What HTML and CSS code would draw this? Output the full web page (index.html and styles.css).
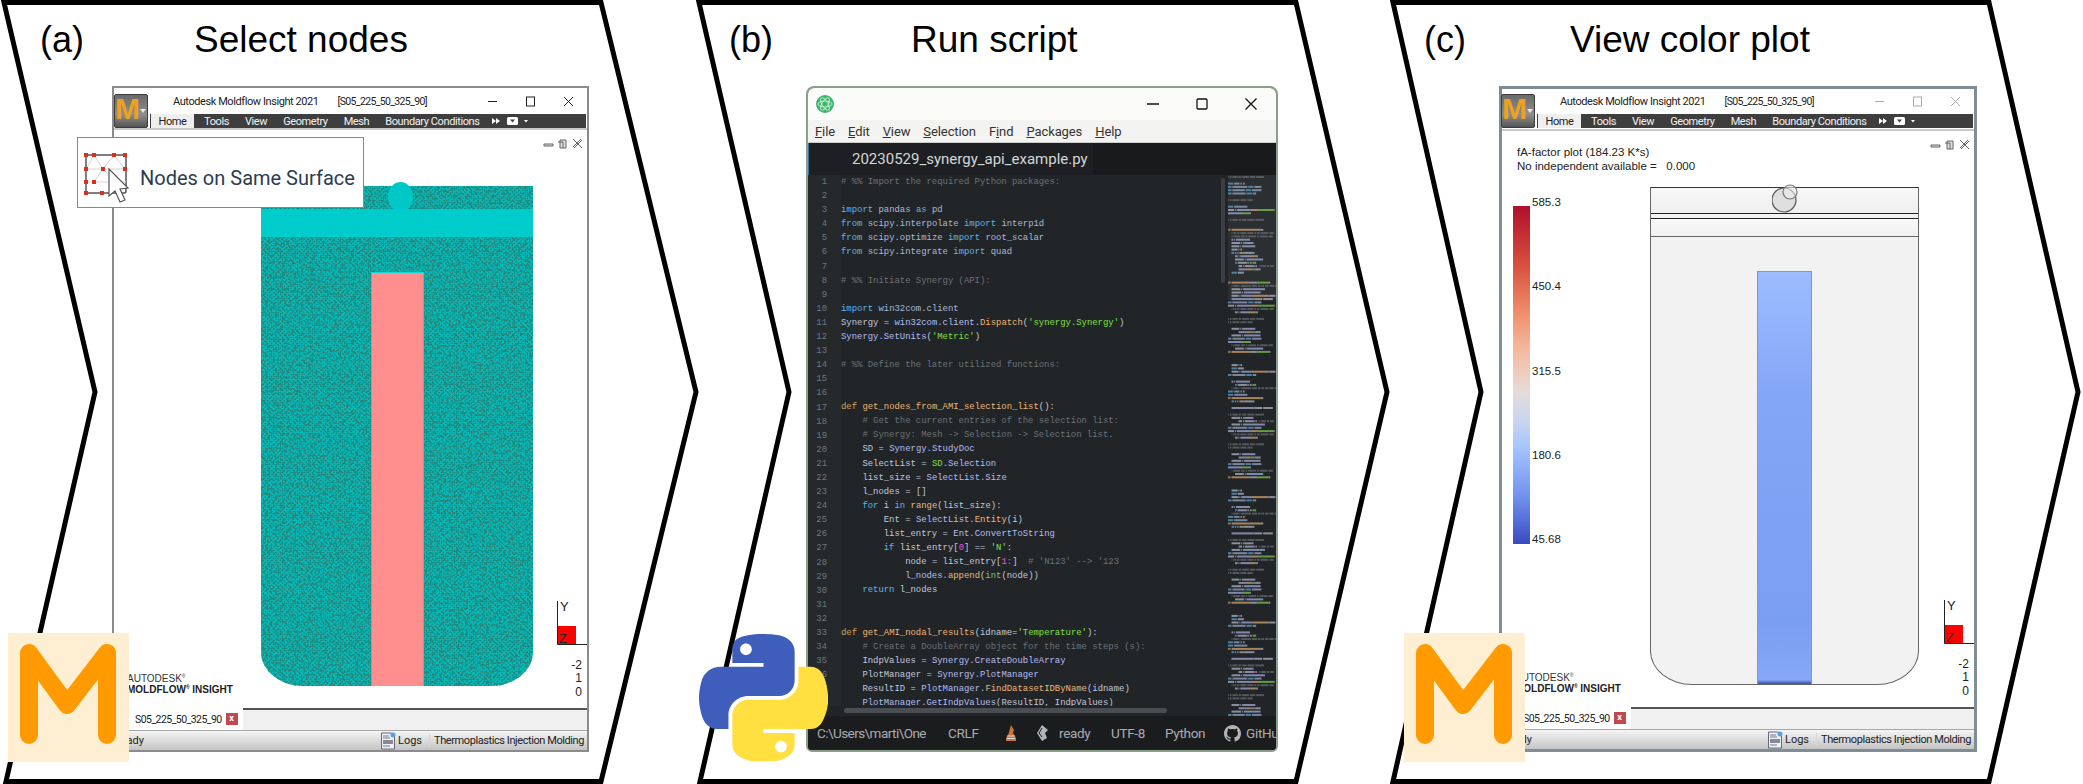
FILE: index.html
```html
<!DOCTYPE html>
<html lang="en">
<head>
    <meta charset="UTF-8">
    <title>Moldflow Synergy API workflow</title>
    <link rel="stylesheet" href="styles.css">
</head>
<body>

<div class="figure">
    <svg class="chevrons" viewBox="0 0 2083 784" width="2083" height="784">
        <polygon points="4,2.5 601,2.5 696,392 601,781.5 6,781.5 95,392"/>
        <polygon points="699,2.5 1296,2.5 1387,392 1296,781.5 700,781.5 789,392"/>
        <polygon points="1393,2.5 1989,2.5 2078,392 1989,781.5 1393,781.5 1481,392"/>
    </svg>

    <!-- (a) -->
    <section class="step step-a">
        <div class="step-head">
            <span class="step-label">(a)</span>
            <span class="step-title">Select nodes</span>
        </div>
        <div class="mf-window mf-window-a">
            <div class="mf-top">
                <div class="mf-button"><span class="mf-button-m">M</span><span class="mf-button-caret"></span></div>
                <div class="mf-top-right">
                    <div class="mf-title">
                        <span class="mf-title-app">Autodesk Moldflow Insight 2021</span>
                        <span class="mf-title-doc">[S05_225_50_325_90]</span>
                        <div class="win-controls">
                            <svg viewBox="0 0 11 11"><path d="M1 5.5h9"/></svg>
                            <svg viewBox="0 0 11 11"><rect x="1.5" y="1" width="8" height="9"/></svg>
                            <svg viewBox="0 0 11 11"><path d="M1 1l9 9M10 1l-9 9"/></svg>
                        </div>
                    </div>
                    <div class="mf-ribbon">
                        <span class="mf-tab-active">Home</span>
                        <span>Tools</span><span>View</span><span>Geometry</span><span>Mesh</span><span>Boundary Conditions</span>
                        <svg class="ribbon-more" viewBox="0 0 44 10" width="44" height="10">
                            <path d="M1 2l4 3-4 3zM5 2l4 3-4 3z" fill="#fff"/>
                            <rect x="16" y="1" width="11" height="8" rx="1.5" fill="#fff"/>
                            <path d="M19 3.5h5l-2.5 3z" fill="#444"/>
                            <path d="M33 4h4l-2 2.5z" fill="#fff"/>
                        </svg>
                    </div>
                </div>
            </div>
            <div class="mf-view">
                <svg class="doc-controls" viewBox="0 0 40 12" width="40" height="12">
                    <path d="M1 7h9v2H1z"/><path d="M17 3h6v8h-6zM15 5h5v6"/><path d="M30 2l8 8M38 2l-8 8M31 3l8 8M39 3l-8 8"/>
                </svg>
                <div class="part part-mesh">
                    <svg class="mesh-noise" width="272" height="500">
                        <filter id="speck" x="0" y="0" width="100%" height="100%">
                            <feTurbulence type="fractalNoise" baseFrequency="0.42" numOctaves="2" seed="7"/>
                            <feColorMatrix values="0 0 0 0 .02  0 0 0 0 .25  0 0 0 0 .2  8 0 0 0 -3.9"/>
                        </filter>
                        <rect width="272" height="500" filter="url(#speck)"/>
                    </svg>
                    <div class="gate-mesh"></div>
                    <div class="mesh-band"></div>
                    <div class="mesh-insert"></div>
                </div>
                <div class="mf-logo"><span class="mf-logo-light">AUTODESK<sup>®</sup></span><span class="mf-logo-bold">MOLDFLOW<sup>®</sup> INSIGHT</span></div>
                <svg class="triad" viewBox="0 0 30 46" width="30" height="46">
                    <rect x="1" y="26" width="18" height="18" fill="#fe0000"/>
                    <path d="M.5 1v43.5H30" fill="none" stroke="#222"/>
                    <text x="3" y="11">Y</text>
                    <text x="2" y="43">Z</text>
                </svg>
                <div class="mf-scale"><span>-2</span><span>1</span><span>0</span></div>
            </div>
            <div class="mf-tabs">
                <div class="mf-doc-tab"><span>S05_225_50_325_90</span><span class="mf-doc-close">x</span></div>
                <div class="mf-tabs-rest"></div>
            </div>
            <div class="mf-status">
                <span class="mf-ready">Ready</span>
                <svg class="logs-icon" viewBox="0 0 16 18" width="16" height="18">
                    <path d="M1.5 1h10l3 3v13h-13z" fill="#eef2f6" stroke="#667"/>
                    <path d="M3 8h10v4H3z" fill="#889"/><path d="M3 14h7M3 4h6M3 6h7" stroke="#778"/>
                    <circle cx="13" cy="3" r="2.5" fill="#5aa0e0"/>
                </svg>
                <span class="mf-logs">Logs</span>
                <span class="mf-mode">Thermoplastics Injection Molding</span>
            </div>
            <div class="tooltip">
                <svg class="tooltip-icon" viewBox="0 0 50 52" width="50" height="52">
                    <rect x="3" y="2" width="40" height="38" rx="2" fill="#fff" stroke="#555" stroke-width="1.5"/>
                    <path d="M3 16h40M3 29h40M11 2l9 14 11-14M20 16l-9 13M20 16l12 13M3 16l8-14M31 2l11 14" fill="none" stroke="#d4d4d4"/>
                    <g fill="#d8321f">
                        <rect x="1" y="0" width="4" height="4"/><rect x="9" y="0" width="4" height="4"/><rect x="29" y="0" width="4" height="4"/><rect x="40" y="0" width="4" height="4"/>
                        <rect x="1" y="14" width="4" height="4"/><rect x="18" y="14" width="4" height="4"/><rect x="40" y="14" width="4" height="4"/>
                        <rect x="1" y="27" width="4" height="4"/><rect x="9" y="27" width="4" height="4"/>
                        <rect x="1" y="38" width="4" height="4"/><rect x="17" y="38" width="4" height="4"/>
                    </g>
                    <path d="M26 16v27l6-5 5 11 5-2-5-11 8-1z" fill="#fff" stroke="#555" stroke-width="1.2"/>
                </svg>
                <span class="tooltip-text">Nodes on Same Surface</span>
            </div>
        </div>
        <div class="badge-m">
            <svg viewBox="0 0 121 129" width="121" height="129"><polyline points="21,102 21,20 59,72 99,20 99,102"/></svg>
        </div>
    </section>

    <!-- (b) -->
    <section class="step step-b">
        <div class="step-head">
            <span class="step-label">(b)</span>
            <span class="step-title">Run script</span>
        </div>
        <div class="atom-window">
            <div class="atom-title">
                <svg class="atom-logo" viewBox="0 0 18 18" width="18" height="18">
                    <circle cx="9" cy="9" r="9" fill="#3fb56f"/>
                    <g fill="none" stroke="#d5f5df" stroke-width=".8">
                        <ellipse cx="9" cy="9" rx="7" ry="3"/>
                        <ellipse cx="9" cy="9" rx="7" ry="3" transform="rotate(60 9 9)"/>
                        <ellipse cx="9" cy="9" rx="7" ry="3" transform="rotate(120 9 9)"/>
                    </g>
                </svg>
                <div class="win-controls">
                    <svg viewBox="0 0 12 12"><path d="M0 6h12"/></svg>
                    <svg viewBox="0 0 12 12"><rect x="1" y="1" width="10" height="10" rx="1"/></svg>
                    <svg viewBox="0 0 12 12"><path d="M.5 .5l11 11M11.5 .5l-11 11"/></svg>
                </div>
            </div>
            <div class="atom-menu">
                <span><u>F</u>ile</span><span><u>E</u>dit</span><span><u>V</u>iew</span><span><u>S</u>election</span><span>F<u>i</u>nd</span><span><u>P</u>ackages</span><span><u>H</u>elp</span>
            </div>
            <div class="atom-tabs"><div class="atom-tab">20230529_synergy_api_example.py</div></div>
            <div class="atom-editor">
<pre class="gutter">1
2
3
4
5
6
7
8
9
10
11
12
13
14
15
16
17
18
19
20
21
22
23
24
25
26
27
28
29
30
31
32
33
34
35
36
37
38</pre>
                <div class="code" id="code">
                    <div class="c"># %% Import the required Python packages:</div>
                    <div></div>
                    <div><span class="k">import</span> <span class="m">pandas</span> <span class="k">as</span> <span class="m">pd</span></div>
                    <div><span class="k">from</span> <span class="m">scipy.interpolate</span> <span class="k">import</span> <span class="m">interp1d</span></div>
                    <div><span class="k">from</span> <span class="m">scipy.optimize</span> <span class="k">import</span> <span class="m">root_scalar</span></div>
                    <div><span class="k">from</span> <span class="m">scipy.integrate</span> <span class="k">import</span> <span class="m">quad</span></div>
                    <div></div>
                    <div class="c"># %% Initiate Synergy (API):</div>
                    <div></div>
                    <div><span class="k">import</span> <span class="m">win32com.client</span></div>
                    <div><span class="v">Synergy</span> <span class="o">=</span> <span class="a">win32com.client.</span><span class="f">Dispatch</span>(<span class="s">'synergy.Synergy'</span>)</div>
                    <div><span class="a">Synergy.SetUnits</span>(<span class="s">'Metric'</span>)</div>
                    <div></div>
                    <div class="c"># %% Define the later utilized functions:</div>
                    <div></div>
                    <div></div>
                    <div><span class="d">def</span> <span class="f">get_nodes_from_AMI_selection_list</span>():</div>
                    <div class="c">    # Get the current entries of the selection list:</div>
                    <div class="c">    # Synergy: Mesh -&gt; Selection -&gt; Selection list.</div>
                    <div>    <span class="v">SD</span> <span class="o">=</span> <span class="a">Synergy.StudyDoc</span></div>
                    <div>    <span class="v">SelectList</span> <span class="o">=</span> <span class="s">SD</span><span class="a">.Selection</span></div>
                    <div>    <span class="v">list_size</span> <span class="o">=</span> <span class="a">SelectList.Size</span></div>
                    <div>    <span class="v">l_nodes</span> <span class="o">=</span> <span class="a">[]</span></div>
                    <div>    <span class="k">for</span> <span class="v">i</span> <span class="k">in</span> <span class="f">range</span>(<span class="v">list_size</span>):</div>
                    <div>        <span class="v">Ent</span> <span class="o">=</span> <span class="a">SelectList.</span><span class="f">Entity</span>(<span class="v">i</span>)</div>
                    <div>        <span class="v">list_entry</span> <span class="o">=</span> <span class="a">Ent.ConvertToString</span></div>
                    <div>        <span class="k">if</span> <span class="v">list_entry</span>[<span class="n">0</span>] <span class="o">==</span> <span class="s">'N'</span>:</div>
                    <div>            <span class="v">node</span> <span class="o">=</span> <span class="v">list_entry</span>[<span class="n">1:</span>]  <span class="c"># 'N123' --&gt; '123</span></div>
                    <div>            <span class="a">l_nodes.</span><span class="f">append</span>(<span class="g">int</span>(<span class="v">node</span>))</div>
                    <div>    <span class="k">return</span> <span class="v">l_nodes</span></div>
                    <div></div>
                    <div></div>
                    <div><span class="d">def</span> <span class="f">get_AMI_nodal_results</span>(<span class="v">idname</span>=<span class="s">'Temperature'</span>):</div>
                    <div class="c">    # Create a DoubleArray object for the time steps (s):</div>
                    <div>    <span class="v">IndpValues</span> <span class="o">=</span> <span class="a">Synergy.CreateDoubleArray</span></div>
                    <div>    <span class="v">PlotManager</span> <span class="o">=</span> <span class="a">Synergy.PlotManager</span></div>
                    <div>    <span class="v">ResultID</span> <span class="o">=</span> <span class="a">PlotManager.</span><span class="f">FindDatasetIDByName</span>(<span class="v">idname</span>)</div>
                    <div>    <span class="a">PlotManager.GetIndpValues</span>(<span class="v">ResultID, IndpValues</span>)</div>
                </div>
                <div class="vscroll"></div>
                <svg class="minimap" id="minimap" width="48" height="541"></svg>
                <div class="hscroll"></div>
            </div>
            <div class="atom-status">
                <span class="atom-path">C:\Users\marti\One</span>
                <span class="atom-crlf">CRLF</span>
                <svg class="atom-kite" viewBox="0 0 10 16" width="10" height="16">
                    <path d="M5 0l3 5-1 3 3 5v3H0v-3l2-3 1-3z" fill="#c9733a"/><path d="M1 11h8M1 13.5h8" stroke="#ddd"/>
                </svg>
                <svg class="atom-git" viewBox="0 0 12 16" width="12" height="16">
                    <path d="M6 0l6 5-3 3 2 5-5 3-5-8z" fill="#aeb4ba"/><path d="M6 3L3 8l3 4" fill="none" stroke="#1b1c1e"/>
                </svg>
                <span class="atom-ready">ready</span>
                <span class="atom-utf">UTF-8</span>
                <span class="atom-lang">Python</span>
                <svg class="atom-github" viewBox="0 0 16 16" width="17" height="19">
                    <path fill="#b4b4b4" d="M8 0C3.58 0 0 3.58 0 8c0 3.54 2.29 6.53 5.47 7.59.4.07.55-.17.55-.38 0-.19-.01-.82-.01-1.49-2.01.37-2.53-.49-2.69-.94-.09-.23-.48-.94-.82-1.13-.28-.15-.68-.52-.01-.53.63-.01 1.08.58 1.23.82.72 1.21 1.87.87 2.33.66.07-.52.28-.87.51-1.07-1.78-.2-3.64-.89-3.64-3.95 0-.87.31-1.59.82-2.15-.08-.2-.36-1.02.08-2.12 0 0 .67-.21 2.2.82.64-.18 1.32-.27 2-.27.68 0 1.36.09 2 .27 1.53-1.04 2.2-.82 2.2-.82.44 1.1.16 1.92.08 2.12.51.56.82 1.27.82 2.15 0 3.07-1.87 3.75-3.65 3.95.29.25.54.73.54 1.48 0 1.07-.01 1.93-.01 2.2 0 .21.15.46.55.38A8.013 8.013 0 0016 8c0-4.42-3.58-8-8-8z"/>
                </svg>
                <span class="atom-hub">GitHu</span>
            </div>
        </div>
        <svg class="badge-python" viewBox="0 0 111 111" preserveAspectRatio="none" width="129" height="127">
            <path fill="#3f5dbb" fill-rule="evenodd" d="M54.919.0001c-4.584.0216-8.961.4125-12.813 1.0938C30.760 3.099 28.700 7.295 28.700 15.032v10.219h26.813v3.406H18.637c-7.792 0-14.616 4.684-16.750 13.594-2.462 10.213-2.571 16.586 0 27.250 1.906 7.938 6.458 13.594 14.250 13.594h9.219v-12.250c0-8.850 7.657-16.656 16.750-16.656h26.781c7.455 0 13.406-6.138 13.406-13.625V15.032c0-7.266-6.130-12.725-13.406-13.937C64.282.328 59.502-.020 54.919.0001zm-14.500 8.219c2.770 0 5.031 2.299 5.031 5.125 0 2.816-2.262 5.094-5.031 5.094-2.780 0-5.031-2.278-5.031-5.094 0-2.826 2.252-5.125 5.031-5.125z"/>
            <path fill="#ffe040" fill-rule="evenodd" d="M85.638 28.657v11.906c0 9.231-7.826 17-16.750 17H42.106c-7.336 0-13.406 6.279-13.406 13.625v25.531c0 7.266 6.319 11.540 13.406 13.625 8.487 2.496 16.626 2.947 26.781 0 6.750-1.954 13.406-5.888 13.406-13.625V86.500H55.513v-3.406h40.188c7.792 0 10.696-5.436 13.406-13.594 2.799-8.399 2.680-16.476 0-27.250-1.926-7.757-5.604-13.594-13.406-13.594zM70.575 93.313c2.780 0 5.031 2.278 5.031 5.094 0 2.826-2.252 5.125-5.031 5.125-2.770 0-5.031-2.299-5.031-5.125 0-2.816 2.262-5.094 5.031-5.094z"/>
        </svg>
    </section>

    <!-- (c) -->
    <section class="step step-c">
        <div class="step-head">
            <span class="step-label">(c)</span>
            <span class="step-title">View color plot</span>
        </div>
        <div class="mf-window mf-window-c">
            <div class="mf-top">
                <div class="mf-button"><span class="mf-button-m">M</span><span class="mf-button-caret"></span></div>
                <div class="mf-top-right">
                    <div class="mf-title">
                        <span class="mf-title-app">Autodesk Moldflow Insight 2021</span>
                        <span class="mf-title-doc">[S05_225_50_325_90]</span>
                        <div class="win-controls">
                            <svg viewBox="0 0 11 11"><path d="M1 5.5h9"/></svg>
                            <svg viewBox="0 0 11 11"><rect x="1.5" y="1" width="8" height="9"/></svg>
                            <svg viewBox="0 0 11 11"><path d="M1 1l9 9M10 1l-9 9"/></svg>
                        </div>
                    </div>
                    <div class="mf-ribbon">
                        <span class="mf-tab-active">Home</span>
                        <span>Tools</span><span>View</span><span>Geometry</span><span>Mesh</span><span>Boundary Conditions</span>
                        <svg class="ribbon-more" viewBox="0 0 44 10" width="44" height="10">
                            <path d="M1 2l4 3-4 3zM5 2l4 3-4 3z" fill="#fff"/>
                            <rect x="16" y="1" width="11" height="8" rx="1.5" fill="#fff"/>
                            <path d="M19 3.5h5l-2.5 3z" fill="#444"/>
                            <path d="M33 4h4l-2 2.5z" fill="#fff"/>
                        </svg>
                    </div>
                </div>
            </div>
            <div class="mf-view">
                <svg class="doc-controls" viewBox="0 0 40 12" width="40" height="12">
                    <path d="M1 7h9v2H1z"/><path d="M17 3h6v8h-6zM15 5h5v6"/><path d="M30 2l8 8M38 2l-8 8M31 3l8 8M39 3l-8 8"/>
                </svg>
                <div class="plot-info">
                    <div>fA-factor plot (184.23 K*s)</div>
                    <div>No independent available = &nbsp; 0.000</div>
                </div>
                <div class="legend">
                    <div class="legend-bar"></div>
                    <div class="legend-labels"><span>585.3</span><span>450.4</span><span>315.5</span><span>180.6</span><span>45.68</span></div>
                </div>
                <div class="part part-plot">
                    <div class="plot-lid"></div>
                    <div class="plot-rim"></div>
                    <div class="plot-strip"></div>
                    <svg class="gate-plot" viewBox="0 0 30 30" width="30" height="30">
                        <circle cx="12" cy="16" r="12" fill="#dedede" stroke="#555" stroke-width="1.2"/>
                        <circle cx="18" cy="8" r="7" fill="#ececec" fill-opacity=".6" stroke="#777" stroke-width="1.2"/>
                    </svg>
                </div>
                <div class="mf-logo"><span class="mf-logo-light">AUTODESK<sup>®</sup></span><span class="mf-logo-bold">MOLDFLOW<sup>®</sup> INSIGHT</span></div>
                <svg class="triad" viewBox="0 0 30 46" width="30" height="46">
                    <rect x="1" y="26" width="18" height="18" fill="#fe0000"/>
                    <path d="M.5 1v43.5H30" fill="none" stroke="#222"/>
                    <text x="3" y="11">Y</text>
                    <text x="2" y="43">Z</text>
                </svg>
                <div class="mf-scale"><span>-2</span><span>1</span><span>0</span></div>
            </div>
            <div class="mf-tabs">
                <div class="mf-doc-tab"><span>S05_225_50_325_90</span><span class="mf-doc-close">x</span></div>
                <div class="mf-tabs-rest"></div>
            </div>
            <div class="mf-status">
                <span class="mf-ready">Ready</span>
                <svg class="logs-icon" viewBox="0 0 16 18" width="16" height="18">
                    <path d="M1.5 1h10l3 3v13h-13z" fill="#eef2f6" stroke="#667"/>
                    <path d="M3 8h10v4H3z" fill="#889"/><path d="M3 14h7M3 4h6M3 6h7" stroke="#778"/>
                    <circle cx="13" cy="3" r="2.5" fill="#5aa0e0"/>
                </svg>
                <span class="mf-logs">Logs</span>
                <span class="mf-mode">Thermoplastics Injection Molding</span>
            </div>
        </div>
        <div class="badge-m">
            <svg viewBox="0 0 121 129" width="121" height="129"><polyline points="21,102 21,20 59,72 99,20 99,102"/></svg>
        </div>
    </section>
</div>

<script src="minimap.js"></script>
</body>
</html>
```

FILE: styles.css
```css
body {
    margin: 0;
    background-color: #fff;
    font-family: "Liberation Sans", Arial, sans-serif;
    color: #000;
}
.figure {
    position: relative;
    display: flex;
    width: 2083px;
    height: 784px;
    overflow: hidden;
}
.chevrons {
    position: absolute;
    top: 0;
    left: 0;
}
.chevrons polygon {
    fill: #fff;
    stroke: #000;
    stroke-width: 5;
}

/* steps */
.step {
    position: relative;
    flex: none;
    width: 694px;
}
.step-b {
    width: 695px;
}
.step-head {
    display: flex;
    height: 67px;
    padding-top: 19px;
    font-size: 36px;
    line-height: 42px;
}
.step-title {
    font-size: 37px;
}
.step-a .step-label { margin-left: 40px; }
.step-a .step-title { margin-left: 110px; }
.step-b .step-label { margin-left: 35px; }
.step-b .step-title { margin-left: 138px; }
.step-c .step-label { margin-left: 35px; }
.step-c .step-title { margin-left: 104px; }

.badge-m {
    position: absolute;
    top: 633px;
    left: 8px;
    width: 121px;
    height: 129px;
    background-color: #ffefd2;
}
.step-c .badge-m {
    left: 15px;
}
.badge-m polyline {
    fill: none;
    stroke: #ff9a00;
    stroke-width: 18;
    stroke-linecap: round;
    stroke-linejoin: round;
}
.badge-python {
    position: absolute;
    top: 634px;
    left: 5px;
}

/* moldflow window */
.mf-window {
    position: relative;
    display: flex;
    flex-direction: column;
    box-sizing: border-box;
    width: 477px;
    height: 666px;
    margin-left: 112px;
    background-color: #fff;
    border: 2px solid #8b8b8b;
    font-family: "Roboto", sans-serif;
    white-space: nowrap;
}
.mf-window-c {
    width: 478px;
    margin-left: 110px;
    border: 3px solid #7e8d96;
}
.mf-top {
    display: flex;
    height: 40px;
}
.mf-button {
    display: flex;
    flex: none;
    box-sizing: border-box;
    width: 34px;
    height: 34px;
    margin-top: 6px;
    background: linear-gradient(#6a6a6a, #8f8f8f 60%, #555);
    border: 1px solid #3c3c3c;
    border-radius: 2px;
}
.mf-window-c .mf-button {
    margin-top: 5px;
    margin-left: -1px;
}
.mf-button-m {
    font-family: "Liberation Sans", sans-serif;
    font-weight: bold;
    font-size: 30px;
    line-height: 28px;
    color: #eda11f;
}
.mf-button-caret {
    width: 0;
    height: 0;
    margin-top: 14px;
    border: 3px solid transparent;
    border-top: 4px solid #e8e8e8;
    border-bottom: 0;
}
.mf-top-right {
    flex: 1;
    display: flex;
    flex-direction: column;
    min-width: 0;
}
.mf-title {
    display: flex;
    align-items: center;
    height: 26px;
    padding-left: 25px;
    font-size: 11px;
    letter-spacing: -.42px;
    color: #222;
}
.mf-window-c .mf-title {
    height: 25px;
}
.mf-title-doc {
    margin-left: 19px;
    font-size: 10.5px;
    letter-spacing: -.65px;
}
.win-controls {
    display: flex;
    gap: 27px;
    margin-left: auto;
    margin-right: 13px;
}
.win-controls svg {
    width: 11px;
    height: 11px;
    fill: none;
    stroke: #222;
    stroke-width: 1;
}
.mf-window-c .win-controls svg {
    stroke: #aaa;
}
.mf-ribbon {
    display: flex;
    align-items: center;
    gap: 16px;
    height: 14px;
    margin-left: 2px;
    margin-right: 1px;
    padding-left: 1px;
    background-color: #3e3e3e;
    font-size: 11px;
    letter-spacing: -.4px;
    color: #f2f2f2;
}
.mf-ribbon .mf-tab-active {
    width: 43px;
    height: 14px;
    margin-right: -6px;
    background-color: #efefef;
    color: #222;
    text-align: center;
    line-height: 15px;
}
.ribbon-more {
    margin-left: -5px;
}
.mf-view {
    position: relative;
    flex: 1;
    border-top: 2px solid #c9c9c9;
}
.doc-controls {
    position: absolute;
    top: 7px;
    right: 4px;
    fill: #ddd;
    stroke: #666;
    stroke-width: 1;
}
.part {
    position: relative;
    display: flex;
    flex-direction: column;
    box-sizing: border-box;
    width: 272px;
    height: 500px;
    margin: 56px 0 0 147px;
    border-radius: 0 0 42px 42px / 0 0 34px 34px;
}
.part-mesh {
    background-color: #08bcbc;
    background-image:
        radial-gradient(circle, rgba(4, 60, 45, .5) 0, rgba(4, 60, 45, .3) .6px, transparent 1.2px),
        radial-gradient(circle, rgba(4, 60, 45, .5) 0, rgba(4, 60, 45, .3) .6px, transparent 1.2px);
    background-size: 4.3px 4.1px;
    background-position: 0 0, 2.15px 2.05px;
}
.mesh-noise {
    position: absolute;
    top: 0;
    left: 0;
    border-radius: 0 0 42px 42px / 0 0 34px 34px;
}
.gate-mesh {
    position: absolute;
    top: -4px;
    left: 127px;
    width: 25px;
    height: 30px;
    background-color: #00c8c8;
    border-radius: 50%;
}
.mesh-band {
    position: relative;
    height: 28px;
    margin-top: 23px;
    background-color: #00cccb;
}
.mesh-insert {
    position: relative;
    flex: 1;
    box-sizing: border-box;
    width: 53px;
    margin: 35px 0 0 110px;
    background-color: #ff8e8e;
    border: solid #12d8d8;
    border-width: 1px 1px 0;
}
.part-plot {
    width: 269px;
    height: 498px;
    margin-left: 148px;
    margin-top: 56px;
    background-color: #f2f2f2;
    border: 1px solid #666;
    border-top-color: #333;
}
.plot-lid {
    flex: none;
    height: 25px;
    background: linear-gradient(#f8f8f8, #efefef);
    border-bottom: 1px solid #222;
}
.plot-rim {
    flex: none;
    height: 17px;
    margin-top: 4px;
    background: linear-gradient(#fafafa, #f0f0f0);
    border-top: 1px solid #222;
    border-bottom: 1px solid #666;
}
.plot-strip {
    flex: 1;
    box-sizing: border-box;
    width: 55px;
    margin: 34px 0 0 106px;
    background: linear-gradient(#9dbcff, #84a6f6 30%, #7a9ef2 85%, #86a8f6 99%, #2f4cb0);
    border: solid #b08a8e;
    border-width: 1px 1px 0;
}
.gate-plot {
    position: absolute;
    top: -4px;
    left: 121px;
}
.plot-info {
    position: absolute;
    top: 15px;
    left: 15px;
    font-family: "Liberation Sans", sans-serif;
    font-size: 11.5px;
    line-height: 13.5px;
    color: #222;
}
.legend {
    position: absolute;
    top: 75px;
    left: 11px;
    display: flex;
    gap: 2px;
    height: 338px;
    font-family: "Liberation Sans", sans-serif;
}
.legend-bar {
    width: 17px;
    background: linear-gradient(#b0102a, #d9523f 18%, #f0906c 32%, #f5b79c 42%, #e6dcd8 55%, #c6d6f2 64%, #a4c2ff 72%, #6f93ee 86%, #3a4abf);
}
.legend-labels {
    display: flex;
    flex-direction: column;
    justify-content: space-between;
    height: 350px;
    margin-top: -10px;
    font-size: 11.5px;
    line-height: 13px;
    color: #222;
}
.mf-logo {
    position: absolute;
    left: 13px;
    bottom: 13px;
    display: flex;
    flex-direction: column;
    color: #333;
    font-family: "Liberation Sans", sans-serif;
    font-size: 10px;
    line-height: 11px;
    letter-spacing: 0;
}
.mf-logo sup {
    font-size: 5px;
    line-height: 0;
}
.mf-logo-bold {
    font-weight: bold;
    color: #222;
}
.triad {
    position: absolute;
    right: 0;
    bottom: 62px;
}
.triad text {
    font-family: "Liberation Sans", sans-serif;
    font-size: 13px;
    fill: #222;
}
.mf-scale {
    position: absolute;
    right: 5px;
    bottom: 9px;
    display: flex;
    flex-direction: column;
    align-items: flex-end;
    font-family: "Liberation Sans", sans-serif;
    font-size: 12px;
    line-height: 13.5px;
    color: #222;
}
.mf-tabs {
    display: flex;
    flex: none;
    height: 22px;
    background-color: #f0f0f0;
    font-size: 10.5px;
    letter-spacing: -.55px;
    color: #222;
}
.mf-doc-tab {
    display: flex;
    align-items: center;
    box-sizing: border-box;
    width: 129px;
    padding-left: 21px;
    background-color: #fff;
}
.mf-doc-close {
    width: 12px;
    height: 12px;
    margin-left: 4px;
    background-color: #c1484d;
    color: #fff;
    font-size: 9px;
    font-weight: bold;
    line-height: 11px;
    letter-spacing: 0;
    text-align: center;
}
.mf-tabs-rest {
    flex: 1;
    border-top: 2px solid #555;
}
.mf-status {
    display: flex;
    align-items: center;
    flex: none;
    box-sizing: border-box;
    height: 20px;
    background: linear-gradient(#f5f5f5, #c4c4c4);
    border-top: 1px solid #a8a8a8;
    font-size: 11px;
    color: #222;
}
.logs-icon {
    margin-left: auto;
}
.mf-logs {
    margin-left: 2px;
}
.mf-mode {
    margin-left: 7px;
    margin-right: 3px;
    padding-left: 4px;
    border-left: 1px solid #d8d8d8;
    letter-spacing: -.42px;
}

/* tooltip */
.tooltip {
    position: absolute;
    top: 49px;
    left: -37px;
    display: flex;
    align-items: center;
    box-sizing: border-box;
    width: 287px;
    height: 71px;
    background-color: #fff;
    border: 1px solid #888;
}
.tooltip-icon {
    flex: none;
    margin: 12px 0 0 5px;
}
.tooltip-text {
    margin: 10px 0 0 7px;
    font-family: "Roboto", sans-serif;
    font-size: 20px;
    color: #2c3c52;
}

/* atom window */
.atom-window {
    display: flex;
    flex-direction: column;
    box-sizing: border-box;
    width: 472px;
    height: 666px;
    margin-left: 112px;
    background-color: #1b1c1e;
    border: 2px solid #8ba08b;
    border-radius: 8px 8px 6px 6px;
    overflow: hidden;
}
.atom-title {
    display: flex;
    align-items: center;
    flex: none;
    height: 32px;
    padding-left: 8px;
    background-color: #fbfcfa;
}
.atom-title .win-controls {
    gap: 37px;
    margin-right: 19px;
}
.atom-title .win-controls svg {
    width: 12px;
    height: 12px;
    stroke: #111;
    stroke-width: 1.3;
}
.atom-menu {
    display: flex;
    align-items: center;
    gap: 13px;
    flex: none;
    height: 23px;
    padding-left: 7px;
    background-color: #f3f3f1;
    border-bottom: 1px solid #ccc;
    box-sizing: border-box;
    font-family: "Roboto", sans-serif;
    font-size: 13px;
    letter-spacing: -.1px;
    color: #333;
}
.atom-tabs {
    flex: none;
    height: 32px;
    background-color: #181a1c;
}
.atom-tab {
    box-sizing: border-box;
    width: 285px;
    height: 32px;
    padding-left: 43px;
    background-color: #1e1f22;
    border-left: 1px solid #3b6c9a;
    font-family: "Roboto", sans-serif;
    font-size: 15px;
    line-height: 33px;
    color: #d4d6d8;
    white-space: nowrap;
}
.atom-editor {
    position: relative;
    display: flex;
    flex: none;
    height: 541px;
    background-color: #222528;
    font-family: "Liberation Mono", monospace;
    font-size: 8.92px;
    line-height: 14.09px;
    overflow: hidden;
}
.gutter {
    flex: none;
    box-sizing: border-box;
    width: 33px;
    height: 531px;
    margin: 0;
    padding-right: 14px;
    overflow: hidden;
    background-color: #25292c;
    color: #70777d;
    font: inherit;
    text-align: right;
}
.code {
    flex: 1;
    min-width: 0;
    height: 531px;
    overflow: hidden;
    color: #c5c8d4;
}
.code > div {
    height: 14.09px;
    white-space: pre;
}
.code .c { color: #6c7176; }
.code .k { color: #5db4e8; }
.code .m { color: #a9b8da; }
.code .v { color: #c2c7dc; }
.code .o { color: #c2c7dc; }
.code .a { color: #b4bdf2; }
.code .f { color: #eeb57a; }
.code .d { color: #c9a55c; }
.code .s { color: #7fe04a; }
.code .n { color: #e053e0; }
.code .g { color: #7cc474; }
.vscroll {
    flex: none;
    width: 4px;
    height: 105px;
    margin: 3px 3px 0 0;
    background-color: #3b3e42;
    border-radius: 2px;
}
.minimap {
    flex: none;
    background: linear-gradient(#2c2f32 0, #2c2f32 125px, transparent 125px);
}
.hscroll {
    position: absolute;
    left: 36px;
    bottom: 3px;
    width: 323px;
    height: 5px;
    background-color: #4a4e52;
    border-radius: 3px;
}
.atom-status {
    display: flex;
    align-items: center;
    flex: 1;
    min-height: 0;
    padding-left: 9px;
    background-color: #1b1c1e;
    font-family: "Roboto", sans-serif;
    font-size: 13.5px;
    letter-spacing: -.3px;
    color: #a9adb1;
    white-space: nowrap;
    overflow: hidden;
}
.atom-status > * { flex: none; }
.atom-path { width: 111px; letter-spacing: -.55px; }
.atom-crlf { width: 28px; margin-left: 20px; }
.atom-kite { margin-left: 30px; }
.atom-git { margin-left: 20px; }
.atom-ready { width: 32px; margin-left: 11px; }
.atom-utf { width: 34px; margin-left: 20px; }
.atom-lang { width: 40px; margin-left: 20px; }
.atom-github { margin-left: 19px; }
.atom-hub { margin-left: 5px; }
```

FILE: minimap.js
```js
// draws the code minimap from the code lines, the file just keeps going below them
const lines = document.querySelectorAll('#code > div');
const map = document.getElementById('minimap');
const PITCH = 3.3;
const CHAR = 0.88;
const TOTAL = 164;

function addBar(x, y, width, color) {
    const bar = document.createElementNS('http://www.w3.org/2000/svg', 'rect');
    bar.setAttribute('x', x);
    bar.setAttribute('y', y);
    bar.setAttribute('width', width);
    bar.setAttribute('height', 2);
    bar.setAttribute('fill', color);
    bar.setAttribute('opacity', 0.65);
    map.appendChild(bar);
}

function drawLine(line, y) {
    let col = 0;
    const walk = (node, color) => {
        node.childNodes.forEach((child) => {
            if (child.nodeType === 1) {
                walk(child, getComputedStyle(child).color);
                return;
            }
            child.textContent.split(/(\s+)/).forEach((word) => {
                if (word.trim()) {
                    addBar(col * CHAR, y, word.length * CHAR, color);
                }
                col += word.length;
            });
        });
    };
    walk(line, getComputedStyle(line).color);
}

for (let i = 0; i < TOTAL; i++) {
    // past the real lines, pick others so the lower part does not look like a copy
    const index = i < lines.length ? i : (i * 7 + 3) % lines.length;
    drawLine(lines[index], 1 + i * PITCH);
}
```
